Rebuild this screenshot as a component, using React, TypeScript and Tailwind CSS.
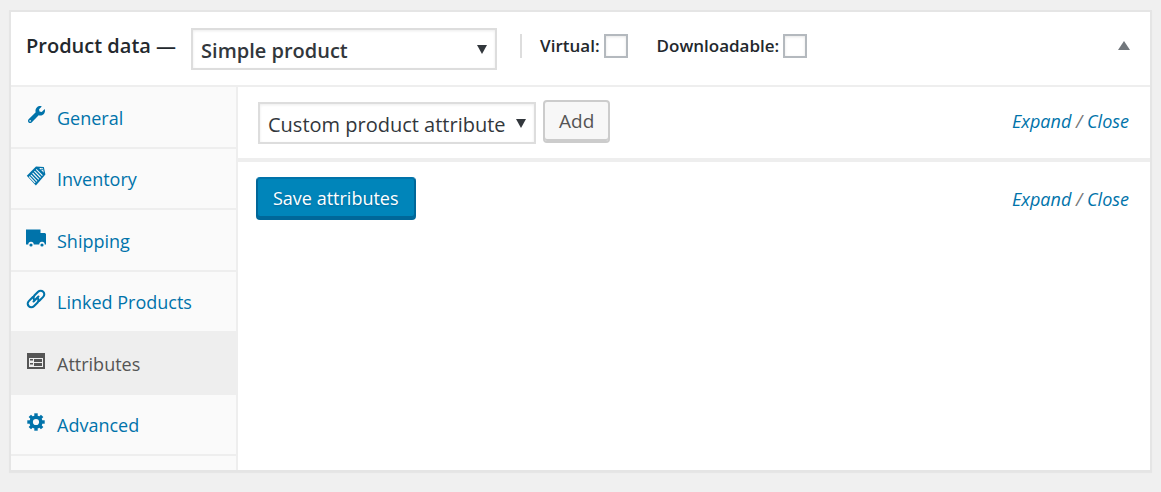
import { useState, type ReactNode } from 'react';
import { clsx } from 'clsx';
import { FaWrench } from 'react-icons/fa';

const TagIcon = () => (
  <svg viewBox="0 0 20 20" className="w-5 h-5" fill="currentColor">
    <path d="M.8 9.8 10 .6l7.8.3 1.6 7.6L9.9 19.4z" />
    <path d="m13.2 1.9 3.7.2.9 4.6z" fill="#fafafa" />
    <circle cx="16" cy="3.4" r=".8" />
    <path
      d="m10.2 3.4 6.2 6.2M8.4 5.2l6.2 6.3M6.6 7l6.2 6.4M4.8 8.8l6.2 6.5M3.2 10.5l6 6.4"
      stroke="#fafafa"
      strokeWidth="1.1"
      fill="none"
    />
  </svg>
);

const TruckIcon = () => (
  <svg viewBox="0 0 20 20" className="w-5 h-5" fill="currentColor">
    <path d="M0 1.5h14.5V5H19l1 1v10.5h-1.3a2.7 2.7 0 0 0-5.4 0H7.7a2.7 2.7 0 0 0-5.4 0H0z" />
    <circle cx="5" cy="17" r="1.6" />
    <circle cx="16" cy="17" r="1.6" />
  </svg>
);

const LinkIcon = () => (
  <svg
    viewBox="0 0 20 20"
    className="w-5 h-5"
    fill="none"
    stroke="currentColor"
    strokeWidth="2.1"
    strokeLinecap="round">
    <g transform="rotate(-45 10 10)">
      <path d="M9.2 6.4H3.4a3.6 3.6 0 0 0 0 7.2h5a3.6 3.6 0 0 0 3.3-2.3" />
      <path d="M10.8 13.6h5.8a3.6 3.6 0 0 0 0-7.2h-5a3.6 3.6 0 0 0-3.3 2.3" />
      <path d="M6.5 10h7" />
    </g>
  </svg>
);

const FormIcon = () => (
  <svg viewBox="0 0 20 20" className="w-5 h-5" fill="currentColor">
    <path d="M1 2h18v16H1z" />
    <path d="M3 7h14v9H3z" fill="#eee" />
    <path d="M4 8h3v1.4H4zM4 12h3v1.4H4zM8 8h8v3H8zM8 12h8v3H8z" />
  </svg>
);

const GearIcon = () => (
  <svg viewBox="0 0 20 20" className="w-5 h-5" fill="currentColor">
    {[0, 45, 90, 135].map((angle) => (
      <rect key={angle} x="8.3" y="1.3" width="3.4" height="17.4" transform={`rotate(${angle} 10 10)`} />
    ))}
    <circle cx="10" cy="10" r="6.6" />
    <circle cx="10" cy="10" r="3.1" fill="#fafafa" />
  </svg>
);

const tabs: { label: string; icon: ReactNode }[] = [
  { label: 'General', icon: <FaWrench className="w-[17px] h-[17px]" /> },
  { label: 'Inventory', icon: <TagIcon /> },
  { label: 'Shipping', icon: <TruckIcon /> },
  { label: 'Linked Products', icon: <LinkIcon /> },
  { label: 'Attributes', icon: <FormIcon /> },
  { label: 'Advanced', icon: <GearIcon /> },
];

function Select({ label, options, className }: { label: string; options: string[]; className: string }) {
  return (
    <div className={clsx('relative', className)}>
      <select
        aria-label={label}
        className="w-full h-[42px] appearance-none border-2 border-[#ddd] bg-white pt-1 pl-2 pr-6 text-[#32373c] shadow-[inset_0_1px_3px_rgba(0,0,0,0.08)]">
        {options.map((option) => (
          <option key={option}>{option}</option>
        ))}
      </select>
      <svg
        viewBox="0 0 10 9"
        className="pointer-events-none absolute right-[10px] top-[17px] w-[10px] h-[9px] fill-[#32373c]">
        <path d="M0 0h10L5 9z" />
      </svg>
    </div>
  );
}

function Checkbox({ id, label }: { id: string; label: string }) {
  return (
    <div className="flex items-center gap-1">
      <label htmlFor={id}>{label}</label>
      <input
        id={id}
        type="checkbox"
        className="w-6 h-6 appearance-none border-2 border-[#b4b9be] bg-white shadow-[inset_0_1px_3px_rgba(0,0,0,0.1)] checked:bg-[#0085ba]"
      />
    </div>
  );
}

function ExpandClose() {
  return (
    <span className="text-lg italic text-[#777]">
      <a href="#expand" className="text-[#0073aa]">Expand</a> /{' '}
      <a href="#close" className="text-[#0073aa]">Close</a>
    </span>
  );
}

export default function App() {
  const [active, setActive] = useState('Attributes');

  return (
    <div className="min-h-screen bg-[#f0f0f0] px-[9px] pt-[10px] pb-5 font-['Open_Sans','Noto_Sans',sans-serif] text-[#23282d]">
      <section className="border-2 border-[#e5e5e5] bg-white shadow-[0_1px_1px_rgba(0,0,0,0.04)]">
        <header className="flex items-center h-[75px] border-b-2 border-[#eee] pl-[15px] pr-5 font-semibold">
          <h2 className="text-xl pb-[6px]">Product data —</h2>
          <Select
            label="Product type"
            options={['Simple product', 'Grouped product', 'Variable product']}
            className="ml-[15px] w-[306px] text-xl"
          />
          <div className="flex flex-1 items-center pb-[6px] pl-[23px] text-[17px]">
            <div className="h-6 w-[2px] bg-[#ddd]" />
            <div className="ml-[18px] flex gap-[29px]">
              <Checkbox id="virtual" label="Virtual:" />
              <Checkbox id="downloadable" label="Downloadable:" />
            </div>
            <button type="button" aria-label="Toggle panel" className="ml-auto flex">
              <svg viewBox="0 0 12 9" className="w-3 h-[9px] fill-[#72777c]">
                <path d="M6 0l6 9H0z" />
              </svg>
            </button>
          </div>
        </header>

        <div className="flex min-h-[383px]">
          <ul className="flex flex-col w-[227px] shrink-0 border-r-2 border-[#eee] bg-[#fafafa] pb-[14px] text-lg">
            {tabs.map(({ label, icon }) => (
              <li key={label} className="flex-1 flex border-b-2 border-[#eee]">
                <a
                  href={`#${label}`}
                  onClick={() => setActive(label)}
                  className={clsx(
                    'flex flex-1 items-center gap-[11px] pl-[15px] pt-[2px]',
                    active === label ? 'bg-[#eee] text-[#555]' : 'text-[#0073aa]',
                  )}>
                  <span className="flex w-5 justify-center pb-[6px]">{icon}</span>
                  {label}
                </a>
              </li>
            ))}
          </ul>

          <div className="flex-1">
            <div className="flex items-center h-[75px] border-b-4 border-[#eee] pl-5 pr-[21px]">
              <Select
                label="Attribute"
                options={['Custom product attribute']}
                className="w-[278px] text-xl"
              />
              <button
                type="button"
                className="ml-[7px] mb-[2px] h-[43px] rounded-[4px] border-2 border-[#ccc] bg-[#f7f7f7] px-[14px] text-[19px] text-[#555] shadow-[inset_0_-2px_0_#ccc]">
                Add
              </button>
              <div className="ml-auto mb-1">
                <ExpandClose />
              </div>
            </div>
            <div className="flex items-center justify-between pt-[15px] pl-[18px] pr-[21px]">
              <button
                type="button"
                className="h-[43px] rounded-[4px] border-2 border-[#006799] border-t-[#0073aa] bg-[#0085ba] px-[15px] pb-[2px] text-lg text-white shadow-[inset_0_-2px_0_#006799] [text-shadow:0_1px_2px_#006799]">
                Save attributes
              </button>
              <ExpandClose />
            </div>
          </div>
        </div>
      </section>
    </div>
  );
}
